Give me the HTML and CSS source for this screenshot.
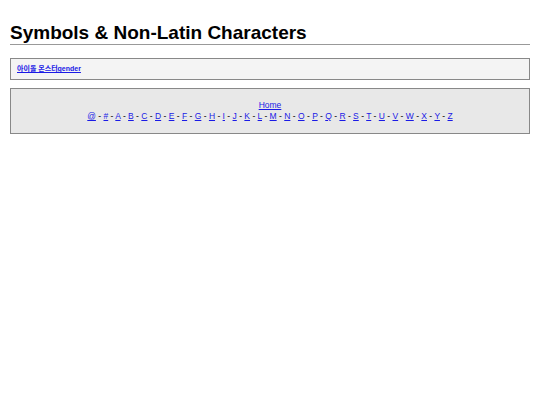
FILE: index.html
```html
<!DOCTYPE html>
<html lang="ko">
<head>
<meta charset="utf-8">
<title>Symbols &amp; Non-Latin Characters</title>
<link rel="stylesheet" href="styles.css">
</head>
<body>
<h1 class="title">Symbols &amp; Non-Latin Characters</h1>
<div class="list-box">
  <a href="#" class="entry">아이돌 몬스터gender</a>
</div>
<div class="nav-box">
  <a href="#">Home</a><br>
  <a href="#">@</a> - <a href="#">#</a> - <a href="#">A</a> - <a href="#">B</a> - <a href="#">C</a> - <a href="#">D</a> - <a href="#">E</a> - <a href="#">F</a> - <a href="#">G</a> - <a href="#">H</a> - <a href="#">I</a> - <a href="#">J</a> - <a href="#">K</a> - <a href="#">L</a> - <a href="#">M</a> - <a href="#">N</a> - <a href="#">O</a> - <a href="#">P</a> - <a href="#">Q</a> - <a href="#">R</a> - <a href="#">S</a> - <a href="#">T</a> - <a href="#">U</a> - <a href="#">V</a> - <a href="#">W</a> - <a href="#">X</a> - <a href="#">Y</a> - <a href="#">Z</a>
</div>
</body>
</html>
```

FILE: styles.css
```css
html, body {
  background: #ffffff;
}
body {
  margin: 0;
  padding: 22px 10px 10px 10px;
  font-family: "Liberation Sans", Arial, "Noto Sans CJK KR", sans-serif;
  color: #000;
}
a {
  color: #1a1ae6;
}
.title {
  margin: 0 0 13px 0;
  font-size: 19px;
  font-weight: bold;
  line-height: 22px;
  border-bottom: 1px solid #999;
  padding-bottom: 0;
}
.list-box {
  background: #f4f4f4;
  border: 1px solid #888;
  padding: 5px 6px;
  margin-bottom: 8px;
  font-size: 7px;
  font-weight: bold;
  line-height: 10px;
}
.nav-box {
  background: #e8e8e8;
  border: 1px solid #888;
  padding: 11px 6px;
  text-align: center;
  font-size: 8.5px;
  line-height: 11px;
}
```
